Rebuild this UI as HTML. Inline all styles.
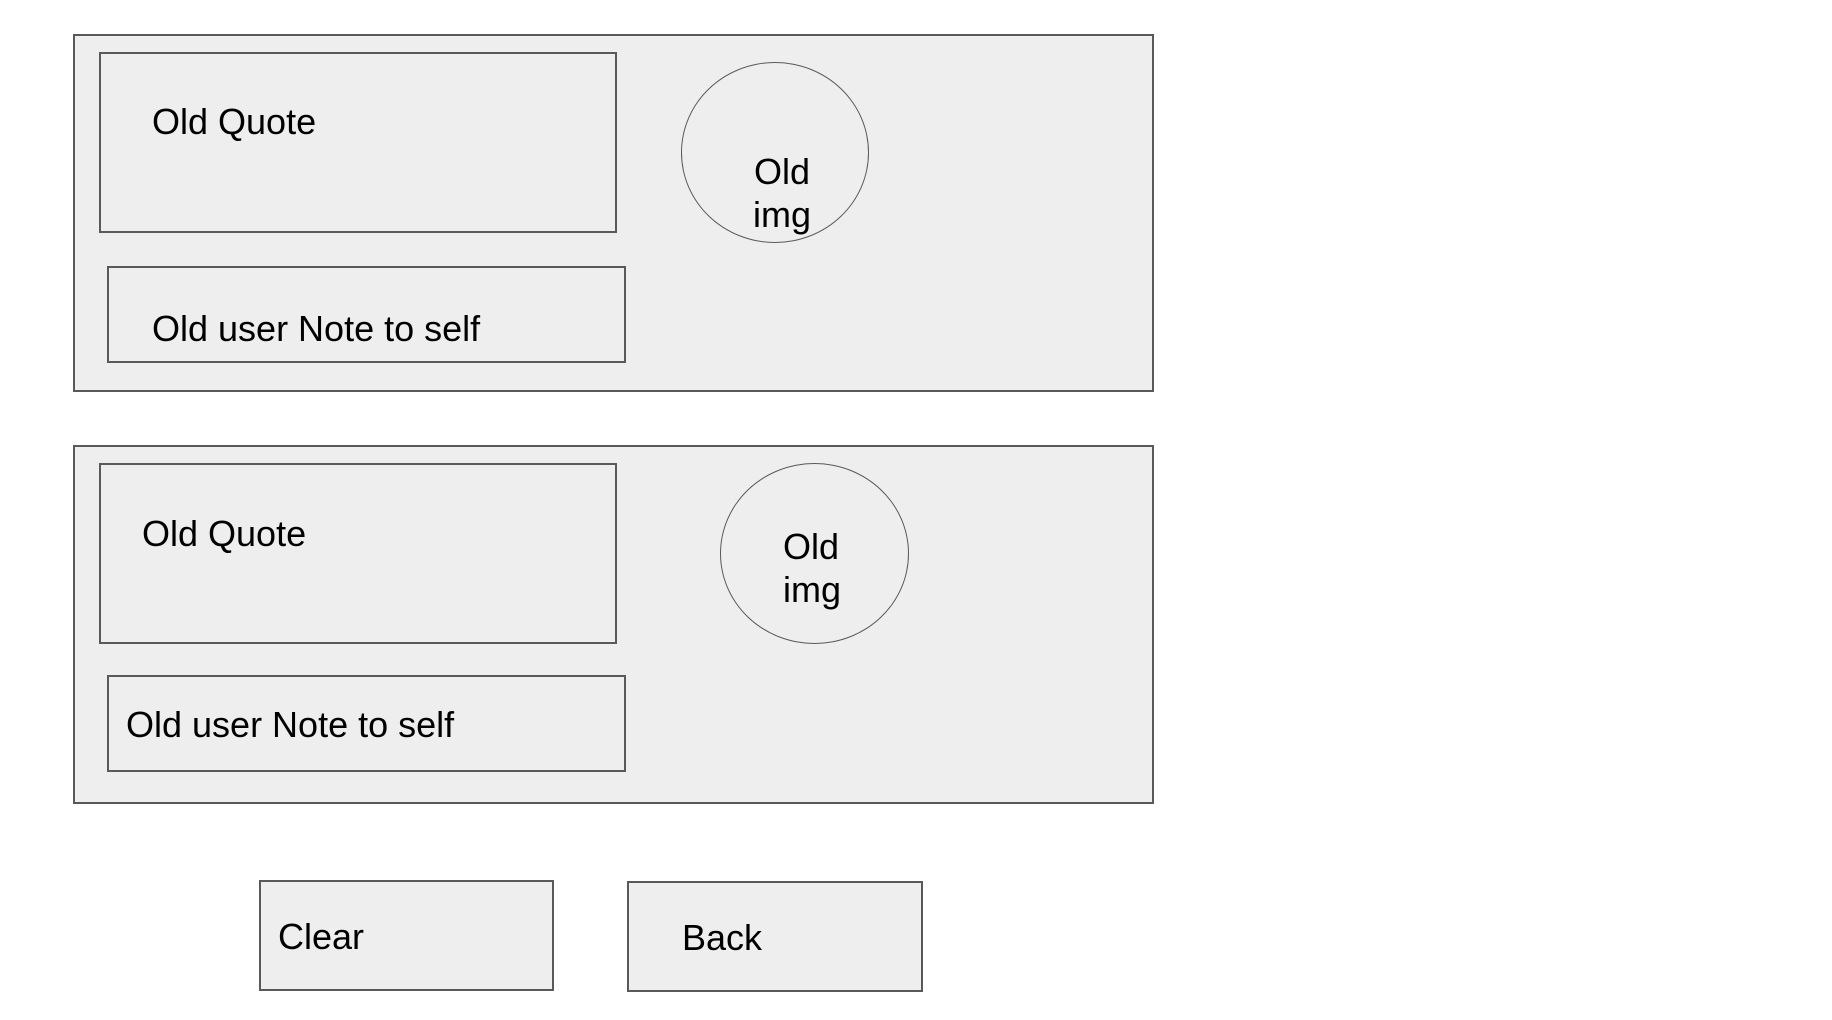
<!DOCTYPE html>
<html><head><meta charset="utf-8"><style>
body{margin:0;width:1832px;height:1020px;background:#fff;position:relative;overflow:hidden;font-family:"Liberation Sans",Arial,sans-serif;color:#000}
.b{position:absolute;background:#eee;border:2px solid #595959;box-sizing:border-box}
.c{position:absolute;border:1.5px solid #595959;border-radius:50%;box-sizing:border-box}
.t{position:absolute;font-size:36px;line-height:40px;white-space:nowrap}
</style></head><body>
<div class="b" style="left:73px;top:34px;width:1081px;height:358px"></div>
<div class="b" style="left:99px;top:52px;width:518px;height:181px"></div>
<div class="c" style="left:681px;top:62px;width:188px;height:181px"></div>
<div class="b" style="left:107px;top:266px;width:519px;height:97px"></div>
<div class="t" style="left:152px;top:102px">Old Quote</div>
<div class="t" style="left:754px;top:152px">Old</div>
<div class="t" style="left:753px;top:195px">img</div>
<div class="t" style="left:152px;top:309px">Old user Note to self</div>

<div class="b" style="left:73px;top:445px;width:1081px;height:359px"></div>
<div class="b" style="left:99px;top:463px;width:518px;height:181px"></div>
<div class="c" style="left:720px;top:463px;width:189px;height:181px"></div>
<div class="b" style="left:107px;top:675px;width:519px;height:97px"></div>
<div class="t" style="left:142px;top:514px">Old Quote</div>
<div class="t" style="left:783px;top:527px">Old</div>
<div class="t" style="left:783px;top:570px">img</div>
<div class="t" style="left:126px;top:705px">Old user Note to self</div>

<div class="b" style="left:259px;top:880px;width:295px;height:111px"></div>
<div class="b" style="left:627px;top:881px;width:296px;height:111px"></div>
<div class="t" style="left:278px;top:917px">Clear</div>
<div class="t" style="left:682px;top:918px">Back</div>
</body></html>
